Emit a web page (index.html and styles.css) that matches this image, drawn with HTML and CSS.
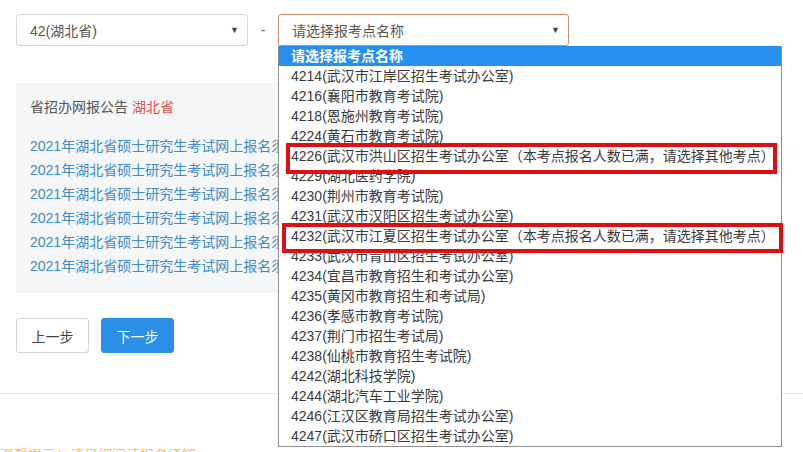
FILE: index.html
```html
<!DOCTYPE html>
<html lang="zh-CN">
<head>
<meta charset="utf-8">
<title>选择报考点</title>
<link rel="stylesheet" href="styles.css">
</head>
<body>
<div class="page">
  <div class="select-row">
    <div class="select select-province">
      <span class="select-text">42(湖北省)</span>
      <span class="caret">▼</span>
    </div>
    <span class="dash">-</span>
    <div class="select-wrap">
      <div class="select select-site">
        <span class="select-text">请选择报考点名称</span>
        <span class="caret">▼</span>
      </div>
      <ul class="options">
        <li class="opt active">请选择报考点名称</li>
        <li class="opt">4214(武汉市江岸区招生考试办公室)</li>
        <li class="opt">4216(襄阳市教育考试院)</li>
        <li class="opt">4218(恩施州教育考试院)</li>
        <li class="opt">4224(黄石市教育考试院)</li>
        <li class="opt">4226(武汉市洪山区招生考试办公室（本考点报名人数已满，请选择其他考点）</li>
        <li class="opt">4229(湖北医药学院)</li>
        <li class="opt">4230(荆州市教育考试院)</li>
        <li class="opt">4231(武汉市汉阳区招生考试办公室)</li>
        <li class="opt">4232(武汉市江夏区招生考试办公室（本考点报名人数已满，请选择其他考点）</li>
        <li class="opt">4233(武汉市青山区招生考试办公室)</li>
        <li class="opt">4234(宜昌市教育招生和考试办公室)</li>
        <li class="opt">4235(黄冈市教育招生和考试局)</li>
        <li class="opt">4236(孝感市教育考试院)</li>
        <li class="opt">4237(荆门市招生考试局)</li>
        <li class="opt">4238(仙桃市教育招生考试院)</li>
        <li class="opt">4242(湖北科技学院)</li>
        <li class="opt">4244(湖北汽车工业学院)</li>
        <li class="opt">4246(江汉区教育局招生考试办公室)</li>
        <li class="opt">4247(武汉市硚口区招生考试办公室)</li>
      </ul>
      <div class="mark mark-one"></div>
      <div class="mark mark-two"></div>
    </div>
  </div>

  <div class="notice">
    <div class="notice-title">省招办网报公告 <span class="province">湖北省</span></div>
    <ul class="notice-list">
      <li><a href="#">2021年湖北省硕士研究生考试网上报名须知</a></li>
      <li><a href="#">2021年湖北省硕士研究生考试网上报名须知</a></li>
      <li><a href="#">2021年湖北省硕士研究生考试网上报名须知</a></li>
      <li><a href="#">2021年湖北省硕士研究生考试网上报名须知</a></li>
      <li><a href="#">2021年湖北省硕士研究生考试网上报名须知</a></li>
      <li><a href="#">2021年湖北省硕士研究生考试网上报名须知</a></li>
    </ul>
  </div>

  <div class="actions">
    <button class="btn btn-default">上一步</button>
    <button class="btn btn-primary">下一步</button>
  </div>
</div>
<div class="divider"></div>
<div class="tip">温馨提示：请仔细阅读报名须知</div>
</body>
</html>
```

FILE: styles.css
```css
* { box-sizing: border-box; }
html, body { margin: 0; padding: 0; }
body {
  width: 803px;
  height: 452px;
  overflow: hidden;
  background: #fff;
  font-family: "Liberation Sans", "Noto Sans CJK SC", sans-serif;
  font-size: 14px;
  color: #555;
}
.page { padding: 14px 16px 0 16px; }

.select-row {
  display: flex;
  align-items: flex-start;
  height: 32px;
  position: relative;
  z-index: 5;
}
.select {
  height: 32px;
  border: 1px solid #d6d6d6;
  border-radius: 3px;
  background: #fff;
  display: flex;
  align-items: center;
  justify-content: space-between;
  padding: 0 8px 0 13px;
  color: #555;
}
.select-province { width: 232px; }
.caret { font-size: 9px; color: #444; }
.dash {
  width: 30px;
  text-align: center;
  line-height: 32px;
  color: #666;
}
.select-wrap { position: relative; width: 291px; }
.select-site {
  width: 291px;
  border-color: #c9906f;
}
.options {
  position: absolute;
  left: 0;
  top: 32px;
  width: 504px;
  margin: 0;
  padding: 0;
  list-style: none;
  background: #fff;
  border: 1px solid #8f8f8f;
  border-top: none;
}
.opt {
  height: 20px;
  line-height: 20px;
  padding-left: 12px;
  color: #3a3a3a;
  white-space: nowrap;
  overflow: hidden;
}
.opt.active {
  background: #2690f0;
  color: #fff;
  font-weight: bold;
}
.mark {
  position: absolute;
  border: 4px solid #dd0f12;
}
.mark-one { left: 8px; top: 129px; width: 491px; height: 31px; }
.mark-two { left: 4px; top: 209px; width: 501px; height: 30px; }

.notice {
  margin-top: 36px;
  width: 600px;
  height: 211px;
  background: #f5f6f7;
  padding: 15px 14px;
}
.notice-title {
  line-height: 20px;
  color: #555;
}
.province { color: #d9534f; }
.notice-list {
  list-style: none;
  margin: 17px 0 0 0;
  padding: 0;
}
.notice-list li { line-height: 24px; white-space: nowrap; }
.notice-list a { color: #4189c7; text-decoration: none; }

.actions {
  display: flex;
  gap: 12px;
  margin-top: 25px;
}
.btn {
  width: 73px;
  height: 35px;
  border-radius: 3px;
  font-family: "Liberation Sans", "Noto Sans CJK SC", sans-serif;
  font-size: 14px;
  cursor: pointer;
}
.btn-default {
  background: #fff;
  border: 1px solid #d4d4d4;
  color: #444;
}
.btn-primary {
  background: #2a8fe6;
  border: 1px solid #2a8fe6;
  color: #fff;
}
.divider {
  margin-top: 40px;
  height: 1px;
  background: #e6e6e6;
}
.tip {
  margin-top: 51px;
  color: #f3c27a;
  font-size: 14px;
  line-height: 20px;
  white-space: nowrap;
}
```
